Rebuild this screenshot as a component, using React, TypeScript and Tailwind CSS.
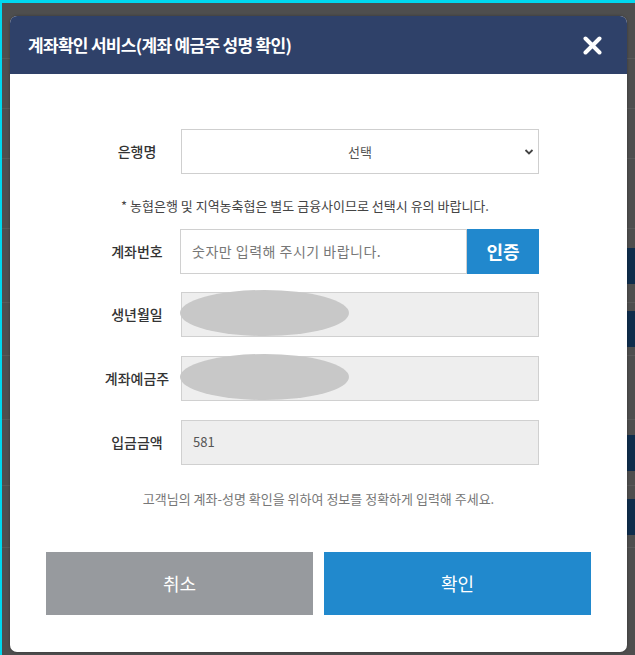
import React from "react";

const font = { fontFamily: '"Noto Sans CJK KR", "Noto Sans", sans-serif' };

// rows of the page that sits behind the dimmed overlay
const bgRows = [
  { h: "h-[56px]", blue: false },
  { h: "h-[50px]", blue: false },
  { h: "h-[50px]", blue: false },
  { h: "h-[70px]", blue: false },
  { h: "h-[74px]", blue: true },
  { h: "h-[53px]", blue: true },
  { h: "h-[64px]", blue: false },
  { h: "h-[66px]", blue: true },
  { h: "h-[62px]", blue: true },
  { h: "h-[110px]", blue: false },
];

function Row({ label, children }: { label: string; children: React.ReactNode }) {
  return (
    <div className="flex items-center">
      <div className="w-[88px] shrink-0 text-center text-[14px] font-medium text-[#333]">{label}</div>
      <div className="flex-1">{children}</div>
    </div>
  );
}

function Redacted() {
  return (
    <div className="relative h-[45px] border border-[#d0d0d0] bg-[#eeeeee]">
      <div className="absolute left-[-2px] top-[-3px] h-[46px] w-[169px] rounded-[50%] bg-[#c8c8c8]" />
    </div>
  );
}

export default function App() {
  return (
    <div className="relative h-[655px] w-[635px] overflow-hidden border-l-[2px] border-t-[3px] border-[#00d8ee] bg-[#4e4e4e]" style={font}>
      <div className="flex flex-col">
        {bgRows.map((r, i) => (
          <div key={i} className={`${r.h} flex items-center justify-end border-b border-[#595959]`}>
            {r.blue && <div className="h-[36px] w-[8px] bg-[#0f2d4c]" />}
          </div>
        ))}
      </div>

      {/* modal */}
      <div className="absolute left-[8px] top-[13px] flex h-[636px] w-[617px] flex-col overflow-hidden rounded-[7px] bg-white shadow-[0_0_3px_rgba(0,0,0,0.3)]">
        <div className="flex h-[58px] shrink-0 items-center justify-between bg-[#2f4169] pl-[18px] pr-[25px]">
          <span className="text-[17px] font-bold tracking-[-0.7px] text-white">계좌확인 서비스(계좌 예금주 성명 확인)</span>
          <svg width="19" height="19" viewBox="0 0 19 19">
            <path d="M2.5 2.5 L16.5 16.5 M16.5 2.5 L2.5 16.5" stroke="white" strokeWidth="4" strokeLinecap="round" />
          </svg>
        </div>

        <div className="flex flex-col pl-[83px] pr-[88px] pt-[55px]">
          <Row label="은행명">
            <div className="relative flex h-[45px] items-center justify-center border border-[#cfcfcf] bg-white text-[13px] text-[#555]">
              선택
              <svg className="absolute right-[4px] top-[18px]" width="10" height="8" viewBox="0 0 10 8">
                <path d="M1.5 2 L5 5.5 L8.5 2" stroke="#444" strokeWidth="1.8" fill="none" />
              </svg>
            </div>
          </Row>

          <p className="mt-[22px] ml-[-22px] text-center text-[13px] text-[#444]">
            * 농협은행 및 지역농축협은 별도 금융사이므로 선택시 유의 바랍니다.
          </p>

          <div className="mt-[13px]">
            <Row label="계좌번호">
              <div className="ml-[-1px] flex h-[45px]">
                <div className="flex flex-1 items-center border border-[#d0d0d0] pl-[11px] text-[14px] tracking-[0.5px] text-[#777]">
                  숫자만 입력해 주시기 바랍니다.
                </div>
                <button className="w-[72px] bg-[#2188cd] text-[18px] font-bold text-white">인증</button>
              </div>
            </Row>
          </div>

          <div className="mt-[18px]">
            <Row label="생년월일">
              <Redacted />
            </Row>
          </div>

          <div className="mt-[19px]">
            <Row label="계좌예금주">
              <Redacted />
            </Row>
          </div>

          <div className="mt-[19px]">
            <Row label="입금금액">
              <div className="flex h-[45px] items-center border border-[#d0d0d0] bg-[#eeeeee] pl-[11px] text-[13px] text-[#555]">581</div>
            </Row>
          </div>
        </div>

        <p className="mt-[24px] text-center text-[13px] text-[#777]">
          고객님의 계좌-성명 확인을 위하여 정보를 정확하게 입력해 주세요.
        </p>

        <div className="mx-[36px] mt-[44px] grid grid-cols-2 gap-[11px]">
          <button className="h-[63px] bg-[#979a9e] text-[18px] text-white">취소</button>
          <button className="h-[63px] bg-[#2189cd] text-[18px] text-white">확인</button>
        </div>
      </div>
    </div>
  );
}
